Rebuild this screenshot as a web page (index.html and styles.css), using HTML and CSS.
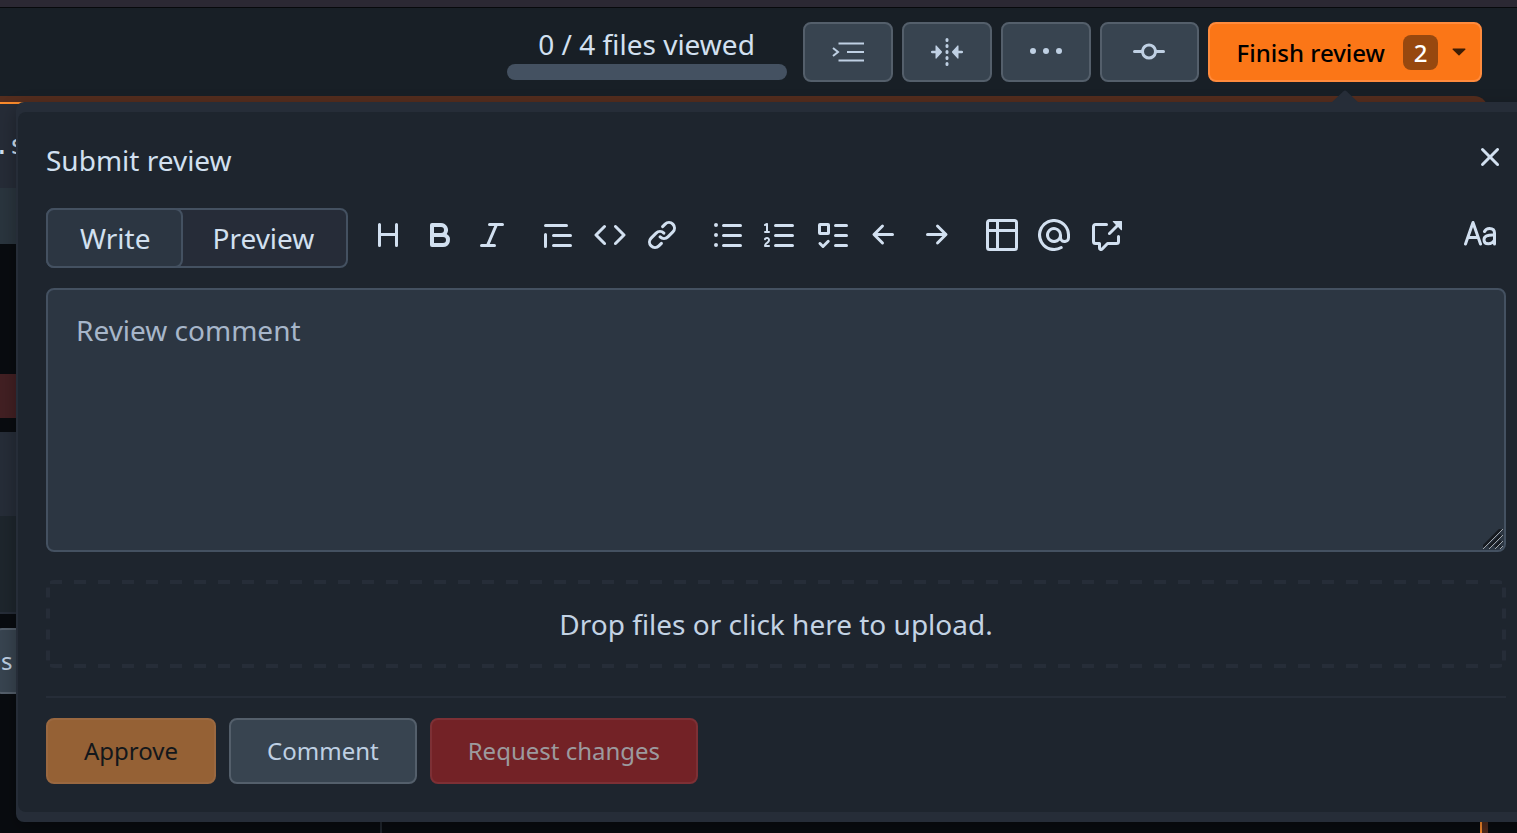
FILE: index.html
```
<!DOCTYPE html>
<html lang="en">
<head>
    <meta charset="UTF-8">
    <meta name="viewport" content="width=device-width, initial-scale=1.0">
    <title>Submit review</title>
    <link rel="stylesheet" href="styles.css">
</head>
<body>
    <header class="review-bar">
        <div class="viewed">
            <label for="viewedProgress">0 / 4 files viewed</label>
            <progress id="viewedProgress" value="0" max="4"></progress>
        </div>
        <div class="bar-buttons">
            <button type="button" class="button tool" aria-label="Whitespace">
                <svg width="32" height="32" viewBox="0 0 32 32" fill="none" stroke="currentColor" stroke-width="2">
                    <path d="M6.5 7.5H32M15 16h17M6.5 24.5H32M1 12l5 4-5 4"/>
                </svg>
            </button>
            <button type="button" class="button tool" aria-label="Split view">
                <svg width="32" height="32" viewBox="0 0 32 32" fill="currentColor">
                    <path d="M1.2 14.7H4.500V10a.5.5 0 0 1 .9-.4l5.300 5.700a1 1 0 0 1 0 1.400l-5.300 5.700a.5.5 0 0 1-.9-.4v-4.700H1.200a1.300 1.300 0 0 1 0-2.600ZM30.800 14.700h-3.300V10a.5.5 0 0 0-.9-.4l-5.300 5.700a1 1 0 0 0 0 1.400l5.300 5.700a.5.5 0 0 0 .9-.4v-4.700h3.300a1.300 1.300 0 0 0 0-2.600Z"/>
                    <path d="M16 3.500v1M16 9.500v1M16 15.500v1M16 21.500v1M16 27.500v1" fill="none" stroke="currentColor" stroke-width="3" stroke-linecap="round"/>
                </svg>
            </button>
            <button type="button" class="button tool" aria-label="More options">
                <svg width="32" height="32" viewBox="0 0 32 32" fill="currentColor"><circle cx="3" cy="15" r="3"/><circle cx="16" cy="15" r="3"/><circle cx="29" cy="15" r="3"/></svg>
            </button>
            <button type="button" class="button tool commits" aria-label="Commits">
                <svg width="32" height="32" viewBox="0 0 16 16" fill="currentColor"><path d="M11.93 8.5a4.002 4.002 0 0 1-7.86 0H.75a.75.75 0 0 1 0-1.5h3.32a4.002 4.002 0 0 1 7.86 0h3.32a.75.75 0 0 1 0 1.5Zm-1.43-.75a2.5 2.5 0 1 0-5 0 2.5 2.5 0 0 0 5 0Z"/></svg>
            </button>
            <button type="button" class="button finish">
                <span>Finish review</span>
                <span class="count">2</span>
                <svg width="14" height="8" viewBox="0 0 14 8" fill="currentColor"><path d="M1 .5h12a.6.6 0 0 1 .4 1L7.5 7.3a.7.7 0 0 1-1 0L.6 1.5a.6.6 0 0 1 .4-1Z"/></svg>
            </button>
        </div>
    </header>

    <main class="diff-file">
        <div class="file-name">.s</div>
        <div class="row hunk"></div>
        <div class="row blank"></div>
        <div class="row removed"></div>
        <div class="row gap"></div>
        <div class="row comment-head"></div>
        <div class="row comment-body"></div>
        <button type="button" class="button resolve">s</button>
        <div class="columns"></div>
    </main>

    <section class="popup" aria-labelledby="popupTitle">
        <svg class="arrow" width="28" height="13" viewBox="0 0 28 13" fill="currentColor"><path d="M0 13 12.5 1.2q1.5-1.4 3 0L28 13Z"/></svg>
        <form class="panel">
            <div class="title-row">
                <h1 id="popupTitle">Submit review</h1>
                <button type="button" class="icon-button close" aria-label="Close">
                    <svg width="32" height="32" viewBox="0 0 16 16"><path d="M3.72 3.72a.75.75 0 0 1 1.06 0L8 6.94l3.22-3.22a.749.749 0 0 1 1.275.326.749.749 0 0 1-.215.734L9.06 8l3.22 3.22a.749.749 0 0 1-.326 1.275.749.749 0 0 1-.734-.215L8 9.06l-3.22 3.22a.751.751 0 0 1-1.042-.018.751.751 0 0 1-.018-1.042L6.94 8 3.72 4.78a.75.75 0 0 1 0-1.06Z"/></svg>
                </button>
            </div>

            <div class="editor-bar">
                <div class="tabs">
                    <button type="button" class="tab active">Write</button>
                    <button type="button" class="tab">Preview</button>
                </div>
                <div class="toolbar">
                    <div class="group">
                        <button type="button" class="icon-button" aria-label="Heading"><svg width="32" height="32" viewBox="0 0 16 16"><path d="M3.75 2a.75.75 0 0 1 .75.75V7h7V2.75a.75.75 0 0 1 1.5 0v10.5a.75.75 0 0 1-1.5 0V8.5h-7v4.75a.75.75 0 0 1-1.5 0V2.75A.75.75 0 0 1 3.75 2Z"/></svg></button>
                        <button type="button" class="icon-button" aria-label="Bold"><svg width="32" height="32" viewBox="0 0 16 16"><path d="M4 2h4.5a3.501 3.501 0 0 1 2.852 5.53A3.499 3.499 0 0 1 9.5 14H4a1 1 0 0 1-1-1V3a1 1 0 0 1 1-1Zm1 7v3h4.5a1.5 1.5 0 0 0 0-3Zm3.5-2a1.5 1.5 0 0 0 0-3H5v3Z"/></svg></button>
                        <button type="button" class="icon-button" aria-label="Italic"><svg width="32" height="32" viewBox="0 0 16 16"><path d="M6 2.75A.75.75 0 0 1 6.75 2h6.5a.75.75 0 0 1 0 1.5h-2.505l-3.858 9H9.25a.75.75 0 0 1 0 1.5h-6.5a.75.75 0 0 1 0-1.5h2.505l3.858-9H6.75A.75.75 0 0 1 6 2.75Z"/></svg></button>
                    </div>
                    <div class="group">
                        <button type="button" class="icon-button" aria-label="Quote"><svg width="32" height="32" viewBox="0 0 16 16"><path d="M1.75 2.5h10.5a.75.75 0 0 1 0 1.5H1.75a.75.75 0 0 1 0-1.5Zm4 5h8.5a.75.75 0 0 1 0 1.5h-8.5a.75.75 0 0 1 0-1.5Zm0 5h8.5a.75.75 0 0 1 0 1.5h-8.5a.75.75 0 0 1 0-1.5ZM2.5 7.75v6a.75.75 0 0 1-1.5 0v-6a.75.75 0 0 1 1.5 0Z"/></svg></button>
                        <button type="button" class="icon-button" aria-label="Code"><svg width="32" height="32" viewBox="0 0 16 16"><path d="m11.28 3.22 4.25 4.25a.75.75 0 0 1 0 1.06l-4.25 4.25a.749.749 0 0 1-1.275-.326.749.749 0 0 1 .215-.734L13.94 8l-3.72-3.72a.749.749 0 0 1 .326-1.275.749.749 0 0 1 .734.215Zm-6.56 0a.751.751 0 0 1 1.042.018.751.751 0 0 1 .018 1.042L2.06 8l3.72 3.72a.749.749 0 0 1-.326 1.275.749.749 0 0 1-.734-.215L.47 8.53a.75.75 0 0 1 0-1.06Z"/></svg></button>
                        <button type="button" class="icon-button" aria-label="Link"><svg width="32" height="32" viewBox="0 0 16 16"><path d="m7.775 3.275 1.25-1.25a3.5 3.5 0 1 1 4.95 4.95l-2.5 2.5a3.5 3.5 0 0 1-4.95 0 .751.751 0 0 1 .018-1.042.751.751 0 0 1 1.042-.018 1.998 1.998 0 0 0 2.83 0l2.5-2.5a2.002 2.002 0 0 0-2.83-2.83l-1.25 1.25a.751.751 0 0 1-1.042-.018.751.751 0 0 1-.018-1.042Zm-4.69 9.64a1.998 1.998 0 0 0 2.83 0l1.25-1.25a.751.751 0 0 1 1.042.018.751.751 0 0 1 .018 1.042l-1.25 1.25a3.5 3.5 0 1 1-4.95-4.95l2.5-2.5a3.5 3.5 0 0 1 4.95 0 .751.751 0 0 1-.018 1.042.751.751 0 0 1-1.042.018 1.998 1.998 0 0 0-2.83 0l-2.5 2.5a1.998 1.998 0 0 0 0 2.83Z"/></svg></button>
                    </div>
                    <div class="group">
                        <button type="button" class="icon-button" aria-label="Bullet list"><svg width="32" height="32" viewBox="0 0 16 16"><path d="M5.75 2.5h8.5a.75.75 0 0 1 0 1.5h-8.5a.75.75 0 0 1 0-1.5Zm0 5h8.5a.75.75 0 0 1 0 1.5h-8.5a.75.75 0 0 1 0-1.5Zm0 5h8.5a.75.75 0 0 1 0 1.5h-8.5a.75.75 0 0 1 0-1.5ZM2 14a1 1 0 1 1 0-2 1 1 0 0 1 0 2Zm1-6a1 1 0 1 1-2 0 1 1 0 0 1 2 0ZM2 4a1 1 0 1 1 0-2 1 1 0 0 1 0 2Z"/></svg></button>
                        <button type="button" class="icon-button" aria-label="Numbered list"><svg width="32" height="32" viewBox="0 0 16 16"><path d="M5 3.25a.75.75 0 0 1 .75-.75h8.5a.75.75 0 0 1 0 1.5h-8.5A.75.75 0 0 1 5 3.25Zm0 5a.75.75 0 0 1 .75-.75h8.5a.75.75 0 0 1 0 1.5h-8.5A.75.75 0 0 1 5 8.25Zm0 5a.75.75 0 0 1 .75-.75h8.5a.75.75 0 0 1 0 1.5h-8.5a.75.75 0 0 1-.75-.75ZM.924 10.32a.5.5 0 0 1-.851-.525l.001-.001.001-.002.002-.004.007-.011c.097-.144.215-.273.348-.384.228-.19.588-.392 1.068-.392.468 0 .858.181 1.126.484.259.294.377.673.377 1.038 0 .987-.686 1.495-1.156 1.845l-.047.035c-.303.225-.522.4-.654.597h1.357a.5.5 0 0 1 0 1H.5a.5.5 0 0 1-.5-.5c0-1.005.692-1.52 1.167-1.875l.035-.025c.531-.396.8-.625.8-1.078a.57.57 0 0 0-.128-.376C1.806 10.068 1.695 10 1.5 10a.658.658 0 0 0-.429.163.835.835 0 0 0-.144.153ZM2.003 2.5V6h.503a.5.5 0 0 1 0 1H.5a.5.5 0 0 1 0-1h.503V3.308l-.28.14a.5.5 0 0 1-.446-.895l1.003-.5a.5.5 0 0 1 .723.447Z"/></svg></button>
                        <button type="button" class="icon-button" aria-label="Task list"><svg width="32" height="32" viewBox="0 0 16 16"><path d="M2 2h4a1 1 0 0 1 1 1v4a1 1 0 0 1-1 1H2a1 1 0 0 1-1-1V3a1 1 0 0 1 1-1Zm4.655 8.595a.75.75 0 0 1 0 1.06L4.03 14.28a.75.75 0 0 1-1.06 0l-1.5-1.5a.749.749 0 0 1 .326-1.275.749.749 0 0 1 .734.215l.97.97 2.095-2.095a.75.75 0 0 1 1.06 0ZM9.75 2.5h5.5a.75.75 0 0 1 0 1.5h-5.5a.75.75 0 0 1 0-1.5Zm0 5h5.5a.75.75 0 0 1 0 1.5h-5.5a.75.75 0 0 1 0-1.5Zm0 5h5.5a.75.75 0 0 1 0 1.5h-5.5a.75.75 0 0 1 0-1.5Zm-7.25-9v3h3v-3Z"/></svg></button>
                        <button type="button" class="icon-button" aria-label="Unindent"><svg width="32" height="32" viewBox="0 0 16 16"><path d="M7.78 12.53a.75.75 0 0 1-1.06 0L2.47 8.28a.75.75 0 0 1 0-1.06l4.25-4.25a.751.751 0 0 1 1.042.018.751.751 0 0 1 .018 1.042L4.81 7h7.44a.75.75 0 0 1 0 1.5H4.81l2.97 2.97a.75.75 0 0 1 0 1.06Z"/></svg></button>
                        <button type="button" class="icon-button" aria-label="Indent"><svg width="32" height="32" viewBox="0 0 16 16"><path d="M8.22 2.97a.75.75 0 0 1 1.06 0l4.25 4.25a.75.75 0 0 1 0 1.06l-4.25 4.25a.751.751 0 0 1-1.042-.018.751.751 0 0 1-.018-1.042l2.97-2.97H3.75a.75.75 0 0 1 0-1.5h7.44L8.22 4.03a.75.75 0 0 1 0-1.06Z"/></svg></button>
                    </div>
                    <div class="group">
                        <button type="button" class="icon-button" aria-label="Table"><svg width="32" height="32" viewBox="0 0 16 16"><path d="M0 1.75C0 .784.784 0 1.75 0h12.5C15.216 0 16 .784 16 1.75v12.5A1.75 1.75 0 0 1 14.25 16H1.75A1.75 1.75 0 0 1 0 14.25ZM6.5 6.5v8h7.75a.25.25 0 0 0 .25-.25V6.5Zm8-1.5V1.75a.25.25 0 0 0-.25-.25H6.5V5Zm-13 1.5v7.75c0 .138.112.25.25.25H5v-8ZM5 5V1.5H1.75a.25.25 0 0 0-.25.25V5Z"/></svg></button>
                        <button type="button" class="icon-button" aria-label="Mention"><svg width="32" height="32" viewBox="0 0 16 16"><path d="M4.75 2.37a6.501 6.501 0 0 0 6.5 11.26.75.75 0 0 1 .75 1.298A7.999 7.999 0 0 1 .989 4.148 8 8 0 0 1 16 7.75v1.5a2.75 2.75 0 0 1-5.072 1.475 3.999 3.999 0 0 1-6.65-4.19A4 4 0 0 1 12 8v1.25a1.25 1.25 0 0 0 2.5 0V7.867a6.5 6.5 0 0 0-9.75-5.496ZM10.5 8a2.5 2.5 0 1 0-5 0 2.5 2.5 0 0 0 5 0Z"/></svg></button>
                        <button type="button" class="icon-button" aria-label="Reference"><svg width="32" height="32" viewBox="0 0 16 16"><path d="M2.75 3.5a.25.25 0 0 0-.25.25v7.5c0 .138.112.25.25.25h2a.75.75 0 0 1 .75.75v2.19l2.72-2.72a.749.749 0 0 1 .53-.22h4.5a.25.25 0 0 0 .25-.25v-2.5a.75.75 0 0 1 1.5 0v2.5A1.75 1.75 0 0 1 13.25 13H9.06l-2.573 2.573A1.458 1.458 0 0 1 4 14.543V13H2.75A1.75 1.75 0 0 1 1 11.25v-7.5C1 2.784 1.784 2 2.75 2h5.5a.75.75 0 0 1 0 1.5ZM16 1.25v4.146a.25.25 0 0 1-.427.177L14.03 4.03l-3.75 3.75a.749.749 0 0 1-1.275-.326.749.749 0 0 1 .215-.734l3.75-3.75-1.543-1.543A.25.25 0 0 1 11.604 1h4.146a.25.25 0 0 1 .25.25Z"/></svg></button>
                    </div>
                    <button type="button" class="icon-button font-toggle" aria-label="Monospace font">
                        <svg class="stroked" width="32" height="32" viewBox="0 0 32 32"><path d="M1.5 25 9 3.5 16.5 25M4.5 18.500h9M20.5 12.500q1.500-3 5-3 5 0 5 4.500v11M30.500 16q-10.500-.5-10.500 4.700 0 4 4.300 4 4.200 0 6.200-3.700"/></svg>
                    </button>
                </div>
            </div>

            <div class="comment-box">
                <textarea placeholder="Review comment" aria-label="Review comment"></textarea>
                <svg class="grip" width="20" height="20" viewBox="0 0 20 20" fill="none"><path d="M0 18 18 0M6 18 18 6M12 18l6-6M17 18l1-1" stroke="#171b21" stroke-width="3"/><path d="M0 20 20 0M6 20 20 6M12 20l8-8M17 20l3-3" stroke="#a0a5ab" stroke-width="1"/></svg>
            </div>

            <button type="button" class="dropzone">Drop files or click here to upload.</button>

            <div class="actions">
                <button type="submit" class="button approve" disabled>Approve</button>
                <button type="submit" class="button comment">Comment</button>
                <button type="submit" class="button reject" disabled>Request changes</button>
            </div>
        </form>
    </section>
</body>
</html>
```
FILE: styles.css
```
* {
    box-sizing: border-box;
}

body {
    position: relative;
    display: flex;
    flex-direction: column;
    height: 100vh;
    margin: 0;
    overflow: hidden;
    font-family: "Noto Sans", sans-serif;
    font-size: 28px;
    background-color: #090c10;
    color: #d2e0f0;
}

button,
textarea {
    font: inherit;
    color: inherit;
}

button {
    cursor: pointer;
}

svg {
    display: block;
    flex: none;
}

/* top bar */
.review-bar {
    display: flex;
    flex: none;
    justify-content: flex-end;
    gap: 16px;
    height: 102px;
    padding: 15px 35px 0 0;
    border-top: 7px solid #2b2833;
    background-color: #181f26;
    box-shadow: inset 0 1px #07090c;
}

.viewed {
    display: flex;
    flex-direction: column;
    width: 280px;
    text-align: center;
}

.viewed label {
    height: 42px;
    line-height: 44px;
}

progress {
    appearance: none;
    width: 100%;
    height: 16px;
    border: none;
    border-radius: 8px;
    overflow: hidden;
    background-color: #445161;
}

progress::-webkit-progress-bar {
    background-color: #445161;
}

.bar-buttons {
    display: flex;
    gap: 9px;
    height: 60px;
}

.button {
    display: flex;
    align-items: center;
    justify-content: center;
    padding: 0 36px;
    border: 2px solid #545f6b;
    border-radius: 8px;
    background-color: #384450;
    color: #bfd0e3;
    font-size: 24px;
}

.tool {
    width: 90px;
    padding: 0;
}

.commits {
    width: 99px;
}

.finish {
    padding: 0 14px 0 27px;
    border-color: #ff8b3d;
    background-color: #fb7617;
    color: #000;
    font-weight: 500;
}

.count {
    width: 35px;
    margin: 0 14px 0 18px;
    border-radius: 8px;
    line-height: 35px;
    background-color: #97480f;
    color: #fff;
}

.finish svg {
    color: #3d1d05;
}

/* diff behind the popup */
.diff-file {
    flex: 1;
    display: flex;
    flex-direction: column;
    align-items: stretch;
    margin: 0 35px 0 -8px;
    border: 2px solid #fb8b2c;
    border-bottom: none;
    border-top-right-radius: 8px;
    box-shadow: 0 0 0 6px #542d1e;
}

.file-name {
    height: 84px;
    line-height: 82px;
    font-family: "DejaVu Sans Mono", monospace;
    font-size: 26px;
    background-color: #262c37;
}

.hunk {
    height: 56px;
    background-color: #2a353e;
}

.blank {
    height: 130px;
}

.removed {
    height: 44px;
    background-color: #422023;
}

.gap {
    height: 14px;
}

.comment-head {
    height: 84px;
    background-color: #262d38;
}

.comment-body {
    height: 98px;
    margin-bottom: 14px;
    border-bottom: 2px solid #262d38;
    background-color: #1e262d;
}

.resolve {
    align-self: flex-start;
    height: 66px;
    padding: 0 36px 2px 5px;
}

.columns {
    flex: 1;
    width: 388px;
    border-right: 2px solid #20262e;
}

/* popup */
.popup {
    position: absolute;
    top: 102px;
    left: 16px;
    right: -19px;
    padding: 10px 2px;
    border-radius: 8px;
    background-color: #262d38;
    box-shadow: 0 6px 18px rgba(0, 0, 0, 0.3);
}

.arrow {
    position: absolute;
    top: -12px;
    right: 177px;
    color: #262d38;
}

.panel {
    padding: 28px;
    border-radius: 8px;
    background-color: #1e252e;
}

.title-row {
    display: flex;
    justify-content: space-between;
    align-items: flex-start;
    margin-bottom: 28px;
}

h1 {
    margin: 0;
    font-size: 28px;
    font-weight: 400;
    line-height: 40px;
}

.icon-button {
    display: flex;
    align-items: center;
    justify-content: center;
    width: 52px;
    height: 54px;
    padding: 0;
    border: none;
    background: none;
}

.icon-button svg {
    fill: currentColor;
}

.icon-button .stroked {
    fill: none;
    stroke: currentColor;
    stroke-width: 3;
    stroke-linecap: round;
    stroke-linejoin: round;
}

.close {
    width: 32px;
    height: 34px;
}

.editor-bar {
    display: flex;
    gap: 14px;
    margin-bottom: 20px;
}

.tabs {
    display: flex;
    height: 60px;
    border: 2px solid #445161;
    border-radius: 8px;
    background-color: #262c38;
}

.tab {
    padding: 0 32px 0 29px;
    border: none;
    background: none;
}

.tab.active {
    margin: -2px 0 -2px -2px;
    padding: 0 31px 0 32px;
    border: 2px solid #445161;
    border-radius: 8px;
    background-color: #2c3642;
}

.toolbar {
    display: flex;
    flex: 1;
    gap: 14px;
}

.group {
    display: flex;
}

.font-toggle {
    margin-left: auto;
}

.comment-box {
    position: relative;
    margin-bottom: 28px;
}

textarea {
    display: block;
    width: 100%;
    height: 264px;
    padding: 20px 28px;
    border: 2px solid #445161;
    border-radius: 8px;
    line-height: 40px;
    resize: none;
    background-color: #2c3642;
}

textarea::placeholder {
    color: #a7b6ca;
}

.grip {
    position: absolute;
    right: 3px;
    bottom: 3px;
}

/* border dashes are longer than the browser's own */
.dropzone {
    display: block;
    width: 100%;
    height: 88px;
    margin-bottom: 28px;
    border: none;
    border-radius: 8px;
    color: #c3d3e4;
    background:
        linear-gradient(90deg, transparent 6px, #262d38 6px 18px, transparent 18px) top / 24px 4px repeat-x,
        linear-gradient(90deg, transparent 6px, #262d38 6px 18px, transparent 18px) bottom / 24px 4px repeat-x,
        linear-gradient(#262d38 5px, transparent 5px 16px, #262d38 16px) left / 4px 21px repeat-y,
        linear-gradient(#262d38 5px, transparent 5px 16px, #262d38 16px) right / 4px 21px repeat-y;
}

.actions {
    display: flex;
    gap: 13px;
    padding-top: 20px;
    border-top: 2px solid #262d38;
}

.actions .button {
    height: 66px;
    padding-bottom: 2px;
}

.approve {
    border-color: #9a6840;
    background-color: #956135;
    color: #13171b;
}

.reject {
    border-color: #7d3035;
    background-color: #732226;
    color: #9c9a9e;
}
```
